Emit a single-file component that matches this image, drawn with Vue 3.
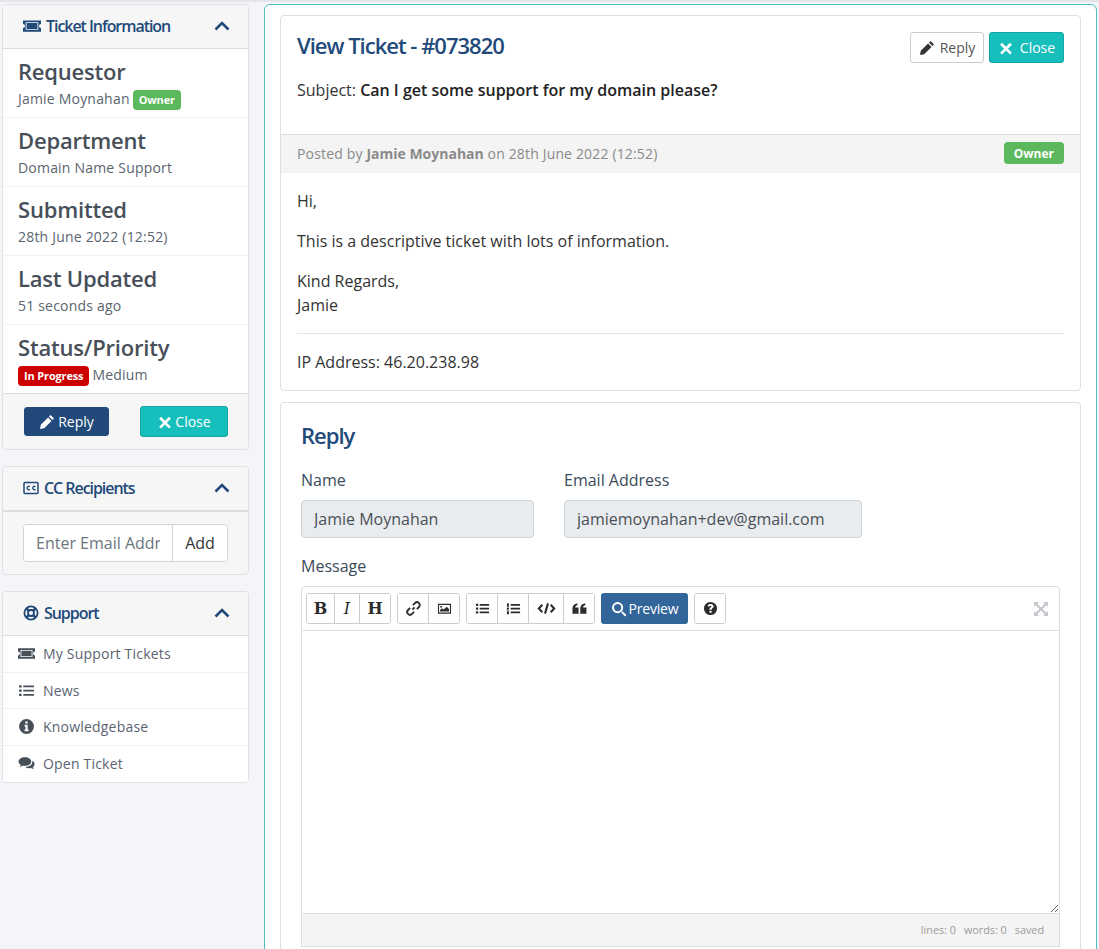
<script setup>
const icons = {
  pencil: 'M11.6 1 15 4.4 13.4 6 10 2.6ZM9.1 3.5 12.5 6.9 5.2 14.2 1 15 1.8 10.8Z',
  times: 'M3.5 2.2 8 6.7 12.5 2.2 14.6 4.3 10.1 8.8 14.6 13.3 12.5 15.4 8 10.9 3.5 15.4 1.4 13.3 5.9 8.8 1.4 4.3Z',
  ticket: 'M0 3H16V6.2A1.8 1.8 0 0 0 16 9.8V13H0V9.8A1.8 1.8 0 0 0 0 6.2ZM2.4 4.6V11.4H13.6V4.6ZM3.2 5.4H12.8V10.6H3.2Z',
  list: 'M1 3H3.4V5.2H1ZM5 3.2H15V5H5ZM1 7H3.4V9.2H1ZM5 7.2H15V9H5ZM1 11H3.4V13.2H1ZM5 11.2H15V13H5Z',
  info: 'M8 1A7 7 0 1 0 8 15 7 7 0 0 0 8 1ZM6.9 3.2H9.1V5.2H6.9ZM6.2 6.4H9.1V10.9H10V12.5H6.2V10.9H7V8H6.2Z',
  comments: 'M6.5 2C3 2 .5 3.8.5 6.1.5 7.4 1.3 8.5 2.6 9.3L1.8 11.2 4.4 10C5.1 10.1 5.8 10.2 6.5 10.2 10 10.2 12.5 8.4 12.5 6.1S10 2 6.5 2ZM13.4 5.5C14.8 6.2 15.6 7.3 15.6 8.6 15.6 9.7 15 10.6 14 11.3L14.7 13.4 12.2 12.2C10.4 12.6 8 12.2 6.8 11.2 10.6 11.2 14 9.4 13.4 5.5Z',
  search: 'M6.6 1A5.6 5.6 0 1 0 6.6 12.2 5.6 5.6 0 0 0 6.6 1ZM6.6 3A3.6 3.6 0 1 1 6.6 10.2 3.6 3.6 0 0 1 6.6 3ZM10.3 11.7 11.7 10.3 15.4 14 14 15.4Z',
  help: 'M8 1A7 7 0 1 0 8 15 7 7 0 0 0 8 1ZM8.1 3.2C10 3.2 11.3 4.2 11.3 5.8 11.3 7.4 9.2 7.7 9.2 9V9.4H6.9V8.8C6.9 7 8.9 6.8 8.9 5.9 8.9 5.4 8.5 5.1 7.9 5.1 7.3 5.1 6.8 5.5 6.3 6.1L4.9 5C5.6 3.9 6.7 3.2 8.1 3.2ZM6.9 10.4H9.2V12.6H6.9Z',
  quote: 'M.5 8C.5 5 2.2 2.8 5.8 2.3V4.6C4.4 4.9 3.6 5.6 3.5 6.8H7V13.5H.5ZM8.8 8C8.8 5 10.5 2.8 14.1 2.3V4.6C12.7 4.9 11.9 5.6 11.8 6.8H15.4V13.5H8.8Z',
  image: 'M1 3H15V13.5H1ZM2.2 4.2V12.3H13.8V4.2ZM3.2 11.2V9.6L5.4 7.8 7 9 10.4 6 12.8 8.4V11.2ZM3.4 5.2H5.4V7H3.4Z',
  expand: 'M1 1H6L4.3 2.7 8 6.4 11.7 2.7 10 1H15V6L13.3 4.3 9.6 8 13.3 11.7 15 10V15H10L11.7 13.3 8 9.6 4.3 13.3 6 15H1V10L2.7 11.7 6.4 8 2.7 4.3 1 6Z'
}
const details = [
  { title: 'Requestor', text: 'Jamie Moynahan', badge: 'Owner', badgeClass: 'green' },
  { title: 'Department', text: 'Domain Name Support' },
  { title: 'Submitted', text: '28th June 2022 (12:52)' },
  { title: 'Last Updated', text: '51 seconds ago' },
  { title: 'Status/Priority', text: 'Medium', badge: 'In Progress', badgeClass: 'red', badgeFirst: true }
]
const links = [
  { label: 'My Support Tickets', icon: icons.ticket },
  { label: 'News', icon: icons.list },
  { label: 'Knowledgebase', icon: icons.info },
  { label: 'Open Ticket', icon: icons.comments }
]
</script>

<template>
  <div class="page">
    <aside class="sidebar">
      <section class="panel">
        <header class="panel-head">
          <h3><svg class="ic head-ic" viewBox="0 0 16 16"><path fill-rule="evenodd" :d="icons.ticket" /></svg>Ticket Information</h3>
          <svg class="chev" viewBox="0 0 16 10"><path d="M1.5 8.5 8 2l6.5 6.5" /></svg>
        </header>
        <div class="details">
          <div v-for="d in details" :key="d.title" class="detail">
            <div class="detail-title">{{ d.title }}</div>
            <div class="detail-text">
              <span v-if="d.badgeFirst" class="badge" :class="d.badgeClass">{{ d.badge }}</span>
              <span>{{ d.text }}</span>
              <span v-if="d.badge && !d.badgeFirst" class="badge" :class="d.badgeClass">{{ d.badge }}</span>
            </div>
          </div>
        </div>
        <footer class="panel-foot">
          <button class="btn navy side-reply"><svg class="ic" viewBox="0 0 16 16"><path :d="icons.pencil" /></svg>Reply</button>
          <button class="btn teal side-close"><svg class="ic" viewBox="-1 -1 18 18"><path :d="icons.times" /></svg>Close</button>
        </footer>
      </section>

      <section class="panel">
        <header class="panel-head thick">
          <h3><svg class="ic cc-ic" viewBox="0 0 16 14"><rect x="1" y="1.5" width="14" height="11" rx="1" fill="none" stroke="currentColor" stroke-width="1.5" /><path d="M6.8 5.6A1.7 1.7 0 1 0 6.8 8.4M12.4 5.6A1.7 1.7 0 1 0 12.4 8.4" fill="none" stroke="currentColor" stroke-width="1.4" /></svg>CC Recipients</h3>
          <svg class="chev" viewBox="0 0 16 10"><path d="M1.5 8.5 8 2l6.5 6.5" /></svg>
        </header>
        <div class="cc-body">
          <div class="input-group">
            <input class="cc-input" placeholder="Enter Email Address" />
            <button class="add">Add</button>
          </div>
        </div>
      </section>

      <section class="panel">
        <header class="panel-head">
          <h3><svg class="ic life-ic" viewBox="0 0 16 16"><circle cx="8" cy="8" r="6.6" fill="none" stroke="currentColor" stroke-width="1.8" /><circle cx="8" cy="8" r="3" fill="none" stroke="currentColor" stroke-width="1.8" /><path d="M3.3 3.3 5.9 5.9M12.7 3.3 10.1 5.9M3.3 12.7 5.9 10.1M12.7 12.7 10.1 10.1" stroke="currentColor" stroke-width="2.6" /></svg>Support</h3>
          <svg class="chev" viewBox="0 0 16 10"><path d="M1.5 8.5 8 2l6.5 6.5" /></svg>
        </header>
        <nav class="links">
          <a v-for="l in links" :key="l.label" class="link">
            <svg class="ic link-ic" viewBox="0 0 16 16"><path fill-rule="evenodd" :d="l.icon" /></svg>{{ l.label }}
          </a>
        </nav>
      </section>
    </aside>

    <main class="main">
      <section class="card ticket">
        <div class="ticket-head">
          <div class="title-row">
            <h2>View Ticket - #073820</h2>
            <div class="actions">
              <button class="btn outline"><svg class="ic" viewBox="0 0 16 16"><path :d="icons.pencil" /></svg>Reply</button>
              <button class="btn teal top-close"><svg class="ic" viewBox="-1 -1 18 18"><path :d="icons.times" /></svg>Close</button>
            </div>
          </div>
          <p class="subject">Subject: <strong>Can I get some support for my domain please?</strong></p>
        </div>
        <div class="posted">
          <span>Posted by <b>Jamie Moynahan</b> on 28th June 2022 (12:52)</span>
          <span class="badge green big">Owner</span>
        </div>
        <div class="message">
          <p>Hi,</p>
          <p>This is a descriptive ticket with lots of information.</p>
          <p>Kind Regards,<br />Jamie</p>
          <hr />
          <p class="ip">IP Address: 46.20.238.98</p>
        </div>
      </section>

      <section class="card reply">
        <h2>Reply</h2>
        <div class="fields">
          <label class="field name"><span>Name</span><input value="Jamie Moynahan" disabled /></label>
          <label class="field email"><span>Email Address</span><input value="jamiemoynahan+dev@gmail.com" disabled /></label>
        </div>
        <div class="msg-label">Message</div>
        <div class="editor">
          <div class="toolbar">
            <div class="group">
              <button class="tb w28 glyph b">B</button>
              <button class="tb w25 glyph i">I</button>
              <button class="tb w30 glyph b">H</button>
            </div>
            <div class="group">
              <button class="tb w30"><svg class="tic" viewBox="0 0 16 16"><path d="M6.8 9.2 9.2 6.8M7.4 4.4 9.6 2.2A2.5 2.5 0 0 1 13.8 6.4L11.6 8.6M8.6 11.6 6.4 13.8A2.5 2.5 0 0 1 2.2 9.6L4.4 7.4" fill="none" stroke="currentColor" stroke-width="2" /></svg></button>
              <button class="tb w30"><svg class="tic" viewBox="0 0 16 16"><path fill-rule="evenodd" :d="icons.image" /></svg></button>
            </div>
            <div class="group">
              <button class="tb w30"><svg class="tic" viewBox="0 0 16 16"><path :d="icons.list" /></svg></button>
              <button class="tb w30"><svg class="tic" viewBox="0 0 16 16"><path d="M1 2.5H3V6H1ZM1 7H3.2V8.2L2 9.5H3.2V10.2H1ZM1 11H3.2V14.2H1ZM5 3.2H15V5H5ZM5 7.2H15V9H5ZM5 11.2H15V13H5Z" /></svg></button>
              <button class="tb w34"><svg class="tic code" viewBox="0 0 20 16"><path d="M5.5 4 1.8 8l3.7 4M14.5 4l3.7 4-3.7 4M11.6 2.5 8.4 13.5" fill="none" stroke="currentColor" stroke-width="2.2" /></svg></button>
              <button class="tb w30"><svg class="tic" viewBox="0 0 16 16"><path :d="icons.quote" /></svg></button>
            </div>
            <button class="preview"><svg class="ic" viewBox="0 0 16 16"><path fill-rule="evenodd" :d="icons.search" /></svg>Preview</button>
            <div class="group">
              <button class="tb w30"><svg class="tic" viewBox="0 0 16 16"><path fill-rule="evenodd" :d="icons.help" /></svg></button>
            </div>
            <svg class="expand" viewBox="0 0 16 16"><path :d="icons.expand" /></svg>
          </div>
          <textarea class="area"></textarea>
          <div class="status">
            <span>lines: 0</span><span>words: 0</span><span>saved</span>
          </div>
        </div>
      </section>
    </main>
  </div>
</template>

<style scoped>
.page {
  height: 949px;
  box-sizing: border-box;
  overflow: hidden;
  display: flex;
  align-items: flex-start;
  gap: 15px;
  padding: 2px 2px 0 2px;
  border-top: 2px solid #e3e5e9;
  background: #f3f5f9;
  font-family: "Open Sans", sans-serif;
  color: #333;
}
button, input, textarea { font-family: inherit; }
.ic { width: 16px; height: 16px; fill: currentColor; flex: none; }

.sidebar { width: 247px; flex: none; display: flex; flex-direction: column; gap: 16px; }
.panel {
  background: #f6f6f6;
  border: 1px solid #dfe1e4;
  border-radius: 4px;
  overflow: hidden;
}
.panel-head {
  height: 44px;
  box-sizing: border-box;
  display: flex;
  align-items: center;
  justify-content: space-between;
  padding: 0 18px 2px 20px;
  border-bottom: 1px solid #dcdcdc;
  background: #f6f6f6;
  color: #214a7a;
}
.panel-head.thick { height: 45px; border-bottom-width: 2px; }
.panel-head h3 {
  margin: 0;
  display: flex;
  align-items: center;
  font-size: 16px;
  font-weight: 600;
  letter-spacing: -1.05px;
}
.head-ic { width: 18px; height: 18px; margin-right: 5px; }
.cc-ic { width: 16px; height: 14px; margin-right: 5px; }
.life-ic { width: 16px; height: 16px; margin-right: 5px; fill: none; }
.chev { width: 16px; height: 10px; fill: none; stroke: #214a7a; stroke-width: 2.6; }

.details { background: #fff; }
.detail { height: 69px; box-sizing: border-box; padding: 7px 15px 0; border-bottom: 1px solid #f2f2f2; }
.detail:last-child { border-bottom: 1px solid #dcdcdc; }
.detail-title { font-size: 22px; line-height: 30px; font-weight: 600; color: #474f59; letter-spacing: -0.2px; }
.detail-text { font-size: 14px; line-height: 22px; color: #5a6470; display: flex; align-items: flex-end; gap: 3px; margin-top: 2px; letter-spacing: 0.2px; }
.badge {
  display: inline-flex;
  align-items: center;
  height: 20px;
  padding: 0 6px;
  border-radius: 4px;
  color: #fff;
  font-size: 11px;
  font-weight: 700;
  letter-spacing: -0.15px;
}
.green { background: #5cb85c; }
.red { background: #cc0000; }
.badge.big { height: 22px; font-size: 12px; padding: 0 10px; letter-spacing: 0; }

.panel-foot { height: 55px; display: flex; align-items: center; justify-content: space-between; padding: 0 20px 0 21px; }
.btn {
  display: inline-flex;
  align-items: center;
  justify-content: center;
  gap: 3px;
  border-radius: 3px;
  font-size: 14px;
  cursor: pointer;
  box-sizing: border-box;
  padding: 0;
}
.navy { background: #214a7a; border: 1px solid #214a7a; color: #fff; }
.teal { background: #17bfbc; border: 1px solid #12a5a2; color: #fff; }
.side-reply { width: 85px; height: 29px; }
.side-close { width: 88px; height: 31px; gap: 2px; }
.cc-body { height: 62px; padding: 12px 20px 0 20px; box-sizing: border-box; }
.input-group {
  display: flex;
  height: 38px;
  box-sizing: border-box;
  border: 1px solid #ced4da;
  border-radius: 4px;
  background: #fff;
  overflow: hidden;
}
.cc-input {
  width: 148px;
  flex: none;
  border: 0;
  padding: 0 12px;
  font-size: 16px;
  outline: 0;
  background: #fff;
  box-sizing: border-box;
}
.cc-input::placeholder { color: #6c757d; opacity: 1; }
.add { flex: 1; border: 0; border-left: 1px solid #ced4da; background: #fff; font-size: 16px; color: #333; padding: 0; }

.links { background: #fff; }
.link {
  height: 36.5px;
  box-sizing: border-box;
  display: flex;
  align-items: center;
  padding-left: 15px;
  border-bottom: 1px solid #f0f0f0;
  font-size: 14px;
  color: #5a6470;
  letter-spacing: 0.2px;
}
.link:last-child { border-bottom: 0; }
.link-ic { width: 17px; height: 17px; margin-right: 8px; fill: #474f59; }

.main {
  flex: 1;
  min-width: 0;
  height: 1100px;
  box-sizing: border-box;
  background: #fff;
  border: 1px solid #4fbfc0;
  border-radius: 6px;
  padding: 10px 15px;
  display: flex;
  flex-direction: column;
  gap: 11px;
}
.card { border: 1px solid #dfdfdf; border-radius: 4px; background: #fff; flex: none; }
.ticket-head { padding: 16px 16px 0; box-sizing: border-box; border-bottom: 1px solid #dcdcdc; height: 119px; }
.title-row { display: flex; justify-content: space-between; align-items: flex-start; height: 31px; }
h2 { margin: 0; font-size: 22px; font-weight: 600; color: #214a7a; letter-spacing: -1px; line-height: 30px; }
.title-row h2 { margin-top: -2px; }
.actions { display: flex; gap: 5px; }
.outline { background: #fff; border: 1px solid #ccc; color: #555; width: 74px; height: 31px; gap: 5px; }
.outline .ic { color: #333; }
.top-close { width: 75px; height: 31px; gap: 6px; }
.subject { margin: 15px 0 0; font-size: 16px; line-height: 24px; color: #333; }
.subject strong { font-weight: 600; color: #222; }
.posted {
  height: 38px;
  box-sizing: border-box;
  background: #f4f4f4;
  display: flex;
  align-items: center;
  justify-content: space-between;
  padding: 0 16px 2px;
  font-size: 14px;
  color: #8a8a8a;
  letter-spacing: 0.16px;
}
.posted b { font-weight: 700; letter-spacing: 0; }
.message { padding: 16px 16px 0; height: 217px; box-sizing: border-box; font-size: 16px; line-height: 24px; color: #333; }
.message p { margin: 0 0 16px; }
.message hr { border: 0; border-top: 1px solid #e4e4e4; margin: 16px 0 16px; }
.reply { padding: 17px 20px 0; height: 700px; box-sizing: border-box; }
.fields { display: flex; gap: 30px; margin-top: 19px; }
.field { display: flex; flex-direction: column; gap: 9px; font-size: 16px; color: #3a4a5a; line-height: 22px; }
.field input {
  height: 38px;
  box-sizing: border-box;
  border: 1px solid #ced4da;
  border-radius: 4px;
  background: #e9ecef;
  padding: 0 12px;
  font-size: 16px;
  color: #495057;
}
.name input { width: 233px; }
.email input { width: 298px; }
.msg-label { margin-top: 17px; font-size: 16px; line-height: 22px; color: #3a4a5a; }
.editor { margin-top: 9px; width: 759px; box-sizing: border-box; border: 1px solid #ddd; border-radius: 4px 4px 0 0; }
.toolbar { height: 44px; box-sizing: border-box; display: flex; align-items: center; gap: 6px; padding: 0 4px; border-bottom: 1px solid #ddd; position: relative; }
.group { display: flex; height: 31px; box-sizing: border-box; border: 1px solid #ccc; border-radius: 3px; background: #fff; overflow: hidden; }
.tb { border: 0; border-left: 1px solid #ccc; background: #fff; padding: 0; display: flex; align-items: center; justify-content: center; color: #2c2c2c; box-sizing: content-box; }
.tb:first-child { border-left: 0; }
.w25 { width: 24px; }
.w28 { width: 27px; }
.w30 { width: 30px; }
.w34 { width: 34px; }
.glyph { font-family: "DejaVu Serif", serif; font-size: 16px; font-weight: 700; }
.glyph.i { font-style: italic; font-weight: 400; }
.tic { width: 15px; height: 15px; fill: currentColor; }
.tic.code { width: 19px; }
.preview {
  width: 87px;
  height: 31px;
  border: 0;
  border-radius: 3px;
  background: #32659a;
  color: #fff;
  font-size: 14px;
  display: inline-flex;
  align-items: center;
  justify-content: center;
  gap: 2px;
  padding: 0;
  letter-spacing: -0.2px;
}
.expand { position: absolute; right: 10px; top: 14px; width: 16px; height: 16px; fill: #c4c8cc; }
.area { display: block; width: 100%; height: 282px; box-sizing: border-box; border: 0; outline: 0; resize: vertical; background: #fff; }
.status { height: 33px; box-sizing: border-box; background: #f4f4f4; border-top: 1px solid #ddd; display: flex; justify-content: flex-end; align-items: center; gap: 8px; padding: 0 15px 2px 0; font-size: 10.8px; color: #9a9a9a; }
</style>
